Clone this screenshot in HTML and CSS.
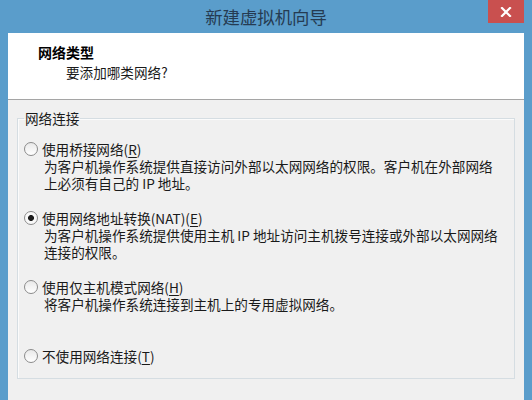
FILE: index.html
```html
<!DOCTYPE html>
<html lang="zh-CN">
<head>
<meta charset="utf-8">
<title>新建虚拟机向导</title>
<link rel="stylesheet" href="styles.css">
</head>
<body>
<div class="window">
  <div class="titlebar">
    <span class="title">新建虚拟机向导</span>
    <span class="close">
      <svg width="12" height="10" viewBox="0 0 12 10"><path d="M2 1 L10 9 M10 1 L2 9" stroke="#fff" stroke-width="2.2" stroke-linecap="square"/></svg>
    </span>
  </div>
  <div class="client">
    <div class="header">
      <div class="h-title">网络类型</div>
      <div class="h-sub">要添加哪类网络?</div>
    </div>
    <div class="body">
      <fieldset class="group">
        <legend class="legend">网络连接</legend>
        <div class="option">
          <div class="row"><span class="radio"></span><span class="label">使用桥接网络(<u>R</u>)</span></div>
          <div class="desc">为客户机操作系统提供直接访问外部以太网网络的权限。客户机在外部网络<br>上必须有自己的 IP 地址。</div>
        </div>
        <div class="option">
          <div class="row"><span class="radio checked"></span><span class="label">使用网络地址转换(NAT)(<u>E</u>)</span></div>
          <div class="desc">为客户机操作系统提供使用主机 IP 地址访问主机拨号连接或外部以太网网络<br>连接的权限。</div>
        </div>
        <div class="option option-gap">
          <div class="row"><span class="radio"></span><span class="label">使用仅主机模式网络(<u>H</u>)</span></div>
          <div class="desc">将客户机操作系统连接到主机上的专用虚拟网络。</div>
        </div>
        <div class="option">
          <div class="row"><span class="radio"></span><span class="label">不使用网络连接(<u>T</u>)</span></div>
        </div>
      </fieldset>
    </div>
  </div>
</div>
</body>
</html>
```
FILE: styles.css
```css
html, body {
  margin: 0;
  padding: 0;
}
body {
  width: 532px;
  height: 400px;
  overflow: hidden;
  font-family: "Noto Sans CJK SC", "Noto Sans", sans-serif;
  font-size: 13.6px;
  color: #1a1a1a;
  background: #5a9dcb;
}
.window {
  width: 532px;
  height: 400px;
  display: flex;
  flex-direction: column;
  background: #5a9dcb;
}
.titlebar {
  position: relative;
  height: 33px;
  display: flex;
  align-items: center;
  justify-content: center;
  flex: none;
}
.title {
  font-size: 17.4px;
  line-height: 20px;
  color: #253b52;
  margin-top: 1px;
}
.close {
  position: absolute;
  top: 0;
  right: 8px;
  width: 36px;
  height: 23px;
  background: #c9504f;
  display: flex;
  align-items: center;
  justify-content: center;
}
.client {
  flex: 1;
  margin: 0 8px;
  display: flex;
  flex-direction: column;
  background: #f0f0f0;
}
.header {
  height: 67px;
  box-sizing: border-box;
  background: #ffffff;
  border-bottom: 1px solid #a5a5a5;
  padding: 10px 0 0 30px;
}
.h-title {
  font-weight: bold;
  font-size: 14px;
  line-height: 19px;
  color: #000;
}
.h-sub {
  line-height: 20px;
  margin-left: 28px;
  color: #1a1a1a;
}
.body {
  flex: 1;
  padding-top: 9px;
}
.group {
  margin: 0 9px;
  padding: 13px 0 13px 6px;
  border: 1px solid #d5dde2;
  box-shadow: inset 1px 1px 0 #fbfbfb;
  min-width: 0;
}
.legend {
  padding: 0 1px;
  line-height: 18px;
  color: #1a1a1a;
}
.option {
  margin-bottom: 17px;
}
.option:last-child {
  margin-bottom: 0;
}
.option-gap {
  margin-bottom: 34px;
}
.row {
  display: flex;
  align-items: center;
  height: 18px;
}
.radio {
  width: 12px;
  height: 12px;
  border: 1px solid #8b8b8b;
  border-radius: 50%;
  background: linear-gradient(#e9e9e9, #ffffff);
  box-sizing: content-box;
  flex: none;
}
.radio.checked {
  background: radial-gradient(circle at center, #1c1c1c 0, #1c1c1c 2.6px, #f6f6f6 3.3px, #ffffff 100%);
}
.label {
  margin-left: 4px;
  line-height: 18px;
  color: #1a1a1a;
}
.desc {
  padding-left: 20px;
  line-height: 17px;
  color: #1a1a1a;
}
u {
  text-decoration: underline;
  text-underline-offset: 2px;
}
```
